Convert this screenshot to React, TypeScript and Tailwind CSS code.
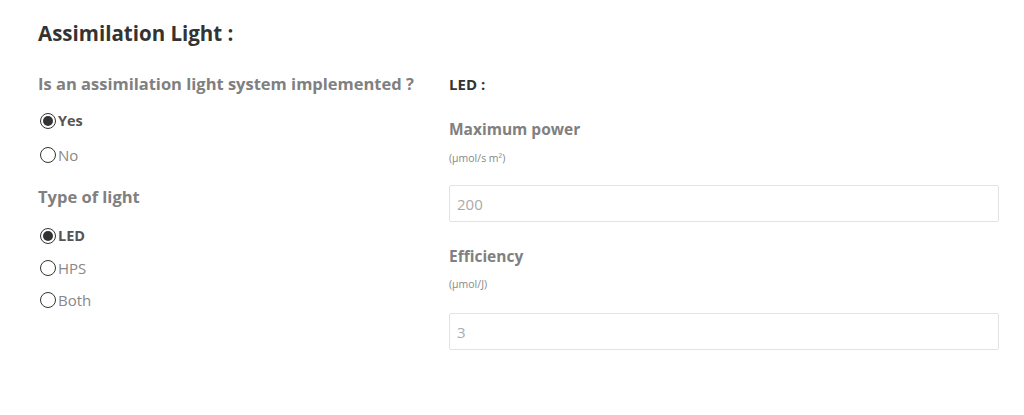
import { useState } from "react";

const Radio = ({
  label,
  checked,
  onClick,
}: {
  label: string;
  checked: boolean;
  onClick: () => void;
}) => {
  return (
    <label
      onClick={onClick}
      className="flex items-center gap-[2px] h-[18px] cursor-pointer pl-[2px]"
    >
      <span className="w-[16px] h-[16px] rounded-full border border-[#333] flex items-center justify-center">
        {checked && <span className="w-[10px] h-[10px] rounded-full bg-[#333]" />}
      </span>
      <span
        className={
          checked
            ? "text-[14.5px] font-bold text-[#555]"
            : "text-[15px] text-[#888]"
        }
      >
        {label}
      </span>
    </label>
  );
};

const Field = ({
  title,
  unit,
  value,
  gapTop,
  gapInput,
}: {
  title: string;
  unit: string;
  value: string;
  gapTop: string;
  gapInput: string;
}) => {
  return (
    <div className="flex flex-col">
      <h4 className="text-[15.5px] font-bold text-[#808080] leading-[20px]">{title}</h4>
      <p className={gapTop + " text-[10.5px] text-[#888] leading-[14px]"}>{unit}</p>
      <input
        defaultValue={value}
        className={
          gapInput +
          " h-[37px] w-full border border-[#e3e3e3] rounded-[2px] px-[7px] text-[15px] text-[#aaa] outline-none"
        }
      />
    </div>
  );
};

export default function App() {
  const [implemented, setImplemented] = useState("Yes");
  const [light, setLight] = useState("LED");

  return (
    <div
      className="w-[1024px] h-[415px] bg-white pl-[38px] pr-[25px] pt-[20px]"
      style={{ fontFamily: '"Open Sans", sans-serif' }}
    >
      <h2 className="text-[20.5px] font-bold text-[#333] leading-[26px]">
        Assimilation Light :
      </h2>
      <div className="mt-[28px] flex">
        <div className="w-[411px] flex flex-col">
          <h4 className="text-[16.5px] font-bold text-[#808080] leading-[20px]">
            Is an assimilation light system implemented ?
          </h4>
          <div className="mt-[18px] flex flex-col gap-[16px]">
            {["Yes", "No"].map((o) => (
              <Radio
                key={o}
                label={o}
                checked={implemented === o}
                onClick={() => setImplemented(o)}
              />
            ))}
          </div>
          <h4 className="mt-[23px] text-[16.5px] font-bold text-[#808080] leading-[20px]">
            Type of light
          </h4>
          <div className="mt-[20px] flex flex-col gap-[14px]">
            {["LED", "HPS", "Both"].map((o) => (
              <Radio
                key={o}
                label={o}
                checked={light === o}
                onClick={() => setLight(o)}
              />
            ))}
          </div>
        </div>
        <div className="flex-1 flex flex-col">
          <h4 className="text-[15px] font-bold text-[#333] leading-[20px]">LED :</h4>
          <div className="mt-[25px]">
            <Field
              title="Maximum power"
              unit="(µmol/s m²)"
              value="200"
              gapTop="mt-[12px]"
              gapInput="mt-[20px]"
            />
          </div>
          <div className="mt-[24px]">
            <Field
              title="Efficiency"
              unit="(µmol/J)"
              value="3"
              gapTop="mt-[11px]"
              gapInput="mt-[22px]"
            />
          </div>
        </div>
      </div>
    </div>
  );
}
